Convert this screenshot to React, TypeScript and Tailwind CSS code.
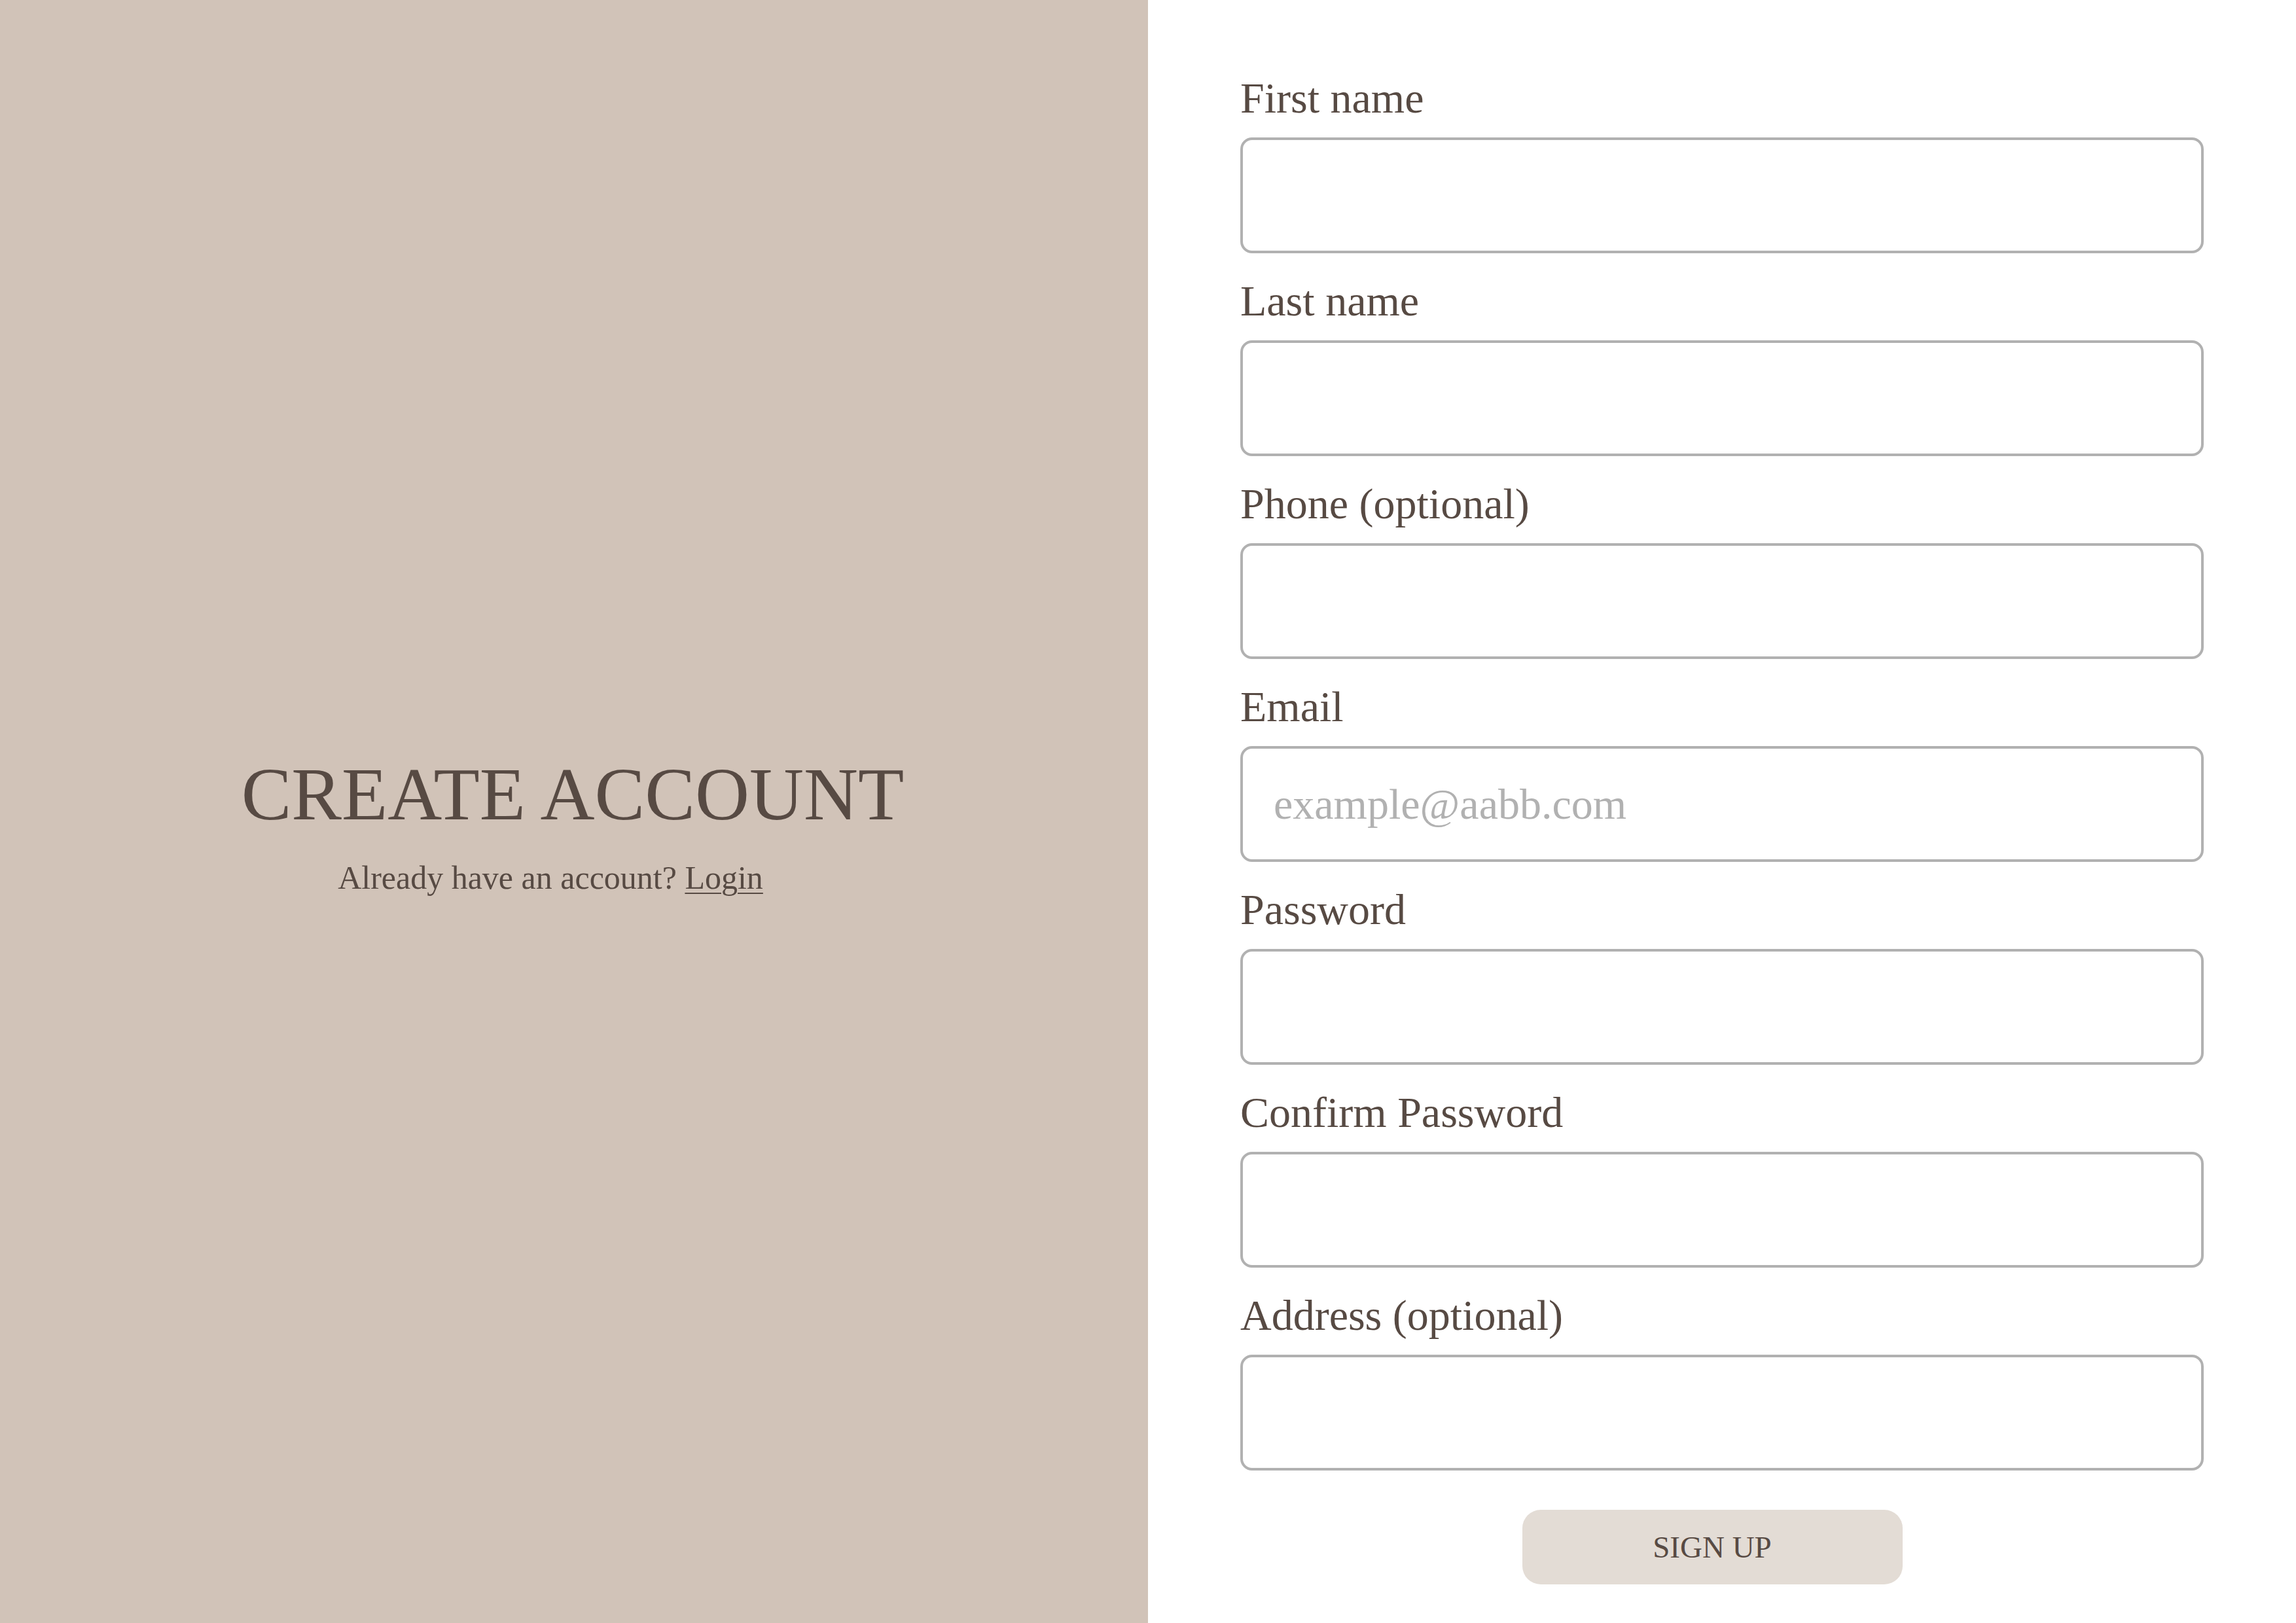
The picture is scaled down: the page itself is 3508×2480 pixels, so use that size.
import React from 'react';

const fields = [
  { id: 'firstName', label: 'First name', type: 'text', placeholder: '' },
  { id: 'lastName', label: 'Last name', type: 'text', placeholder: '' },
  { id: 'phone', label: 'Phone (optional)', type: 'tel', placeholder: '' },
  { id: 'email', label: 'Email', type: 'email', placeholder: 'example@aabb.com' },
  { id: 'password', label: 'Password', type: 'password', placeholder: '' },
  { id: 'confirm', label: 'Confirm Password', type: 'password', placeholder: '' },
  { id: 'address', label: 'Address (optional)', type: 'text', placeholder: '' },
];

export default function App() {
  return (
    <div className="grid h-screen w-full grid-cols-2 font-['Liberation_Serif',serif] text-[#574a43]">
      <section className="flex flex-col items-center justify-center bg-[#d1c3b8] pt-[35px]">
        <h1 className="mr-[4px] text-[115px] leading-[1.2] font-normal">CREATE ACCOUNT</h1>
        <p className="mt-[28px] mr-[72px] text-[50px] leading-[1.2]">
          Already have an account? <a href="#" className="underline decoration-2 underline-offset-[6px]">Login</a>
        </p>
      </section>

      <section className="flex flex-col bg-white px-[141px] pt-[110px]">
        <form className="flex flex-col gap-[33px]" onSubmit={(e) => e.preventDefault()}>
          {fields.map((field) => (
            <FormField key={field.id} field={field} />
          ))}
        </form>
        <div className="mt-[60px] flex justify-center pr-[30px]">
          <button className="h-[114px] w-[581px] rounded-[28px] bg-[#e3dcd5] text-[47px] text-[#574a43]">
            SIGN UP
          </button>
        </div>
      </section>
    </div>
  );
}

function FormField({ field }: { field: Field }) {
  return (
    <div className="flex flex-col">
      <label htmlFor={field.id} className="mb-[21px] text-[66px] leading-[79px]">
        {field.label}
      </label>
      <input
        id={field.id}
        type={field.type}
        placeholder={field.placeholder}
        className="h-[177px] w-full rounded-[18px] border-4 border-[#b1b1b1] bg-white px-[47px] text-[66px] text-[#574a43] outline-none placeholder:text-[#b1b1b1]"
      />
    </div>
  );
}

type Field = {
  id: string;
  label: string;
  type: string;
  placeholder: string;
};
